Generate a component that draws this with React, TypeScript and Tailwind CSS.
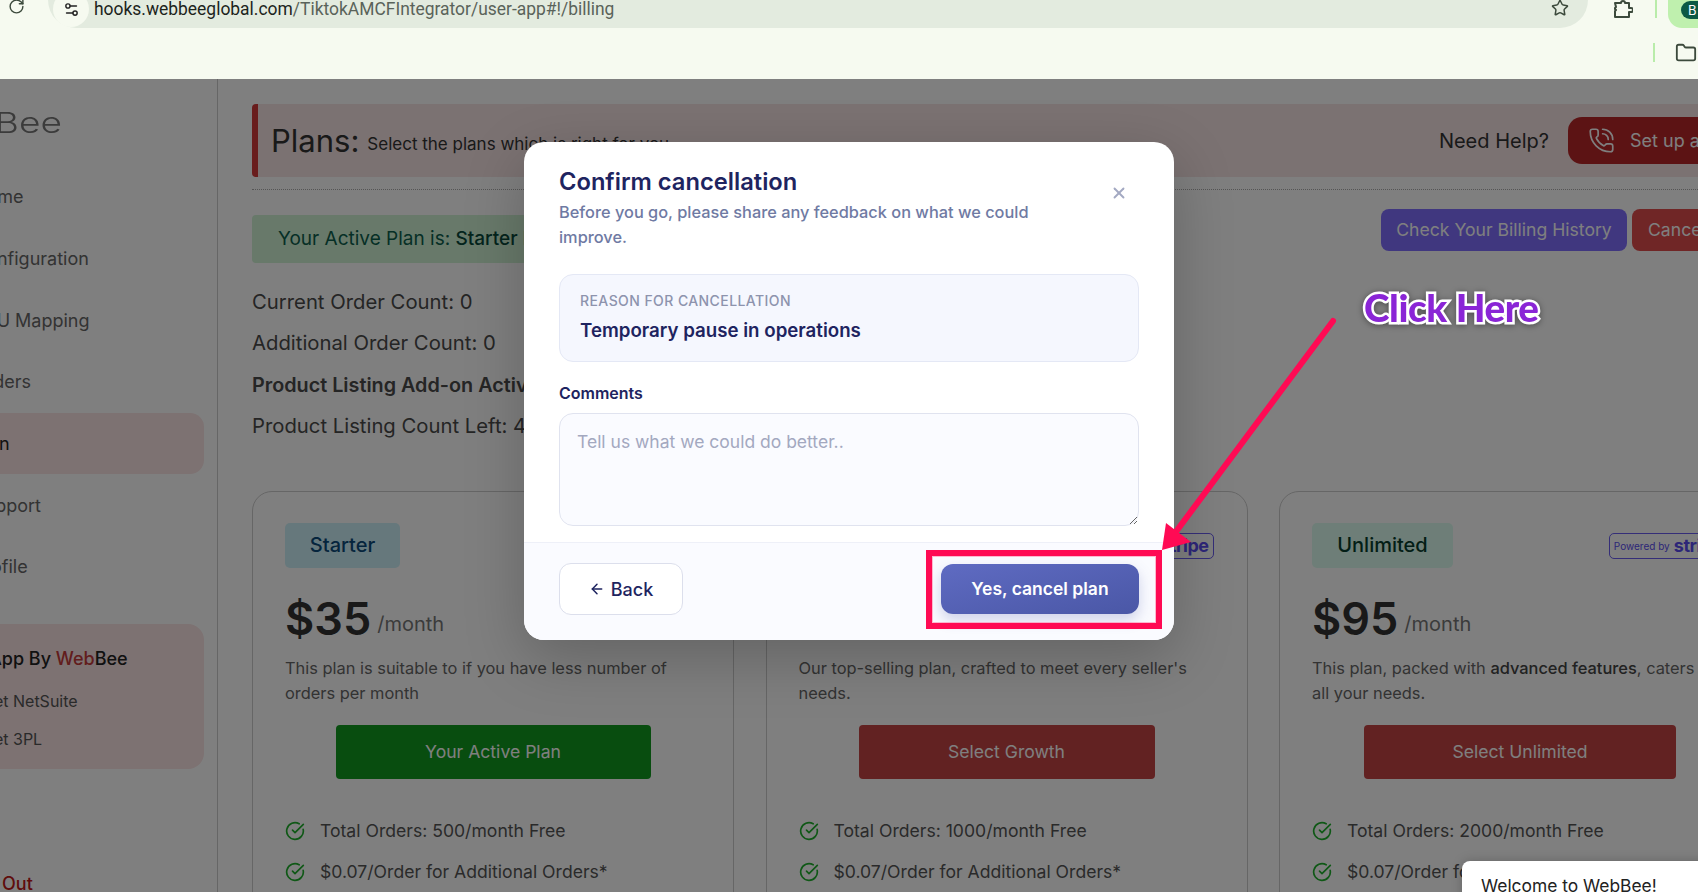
import React from "react";
import { ArrowLeft, CircleCheckBig, Folder, PhoneCall, RotateCw, Settings2, Star, X } from "lucide-react";

const navItems = ["Home", "Configuration", "SKU Mapping", "Orders", "Plan", "Support", "Profile"];

interface Plan {
  name: string;
  price: string;
  orders: string;
  cta: string;
  badge: string;
  nameColor: string;
  button: string;
  buttonWidth: string;
  desc: React.ReactNode;
}

const plans: Plan[] = [
  {
    name: "Starter",
    price: "$35",
    orders: "Total Orders: 500/month Free",
    cta: "Your Active Plan",
    badge: "bg-[#cdf0f8] w-[115px]",
    nameColor: "text-[#0a4a7a]",
    button: "bg-[#109a1e]",
    buttonWidth: "w-[315px]",
    desc: "This plan is suitable to if you have less number of orders per month",
  },
  {
    name: "Growth",
    price: "$65",
    orders: "Total Orders: 1000/month Free",
    cta: "Select Growth",
    badge: "bg-[#e6e0ff] w-[115px]",
    nameColor: "text-[#3d2a9c]",
    button: "bg-[#c44444]",
    buttonWidth: "w-[296px]",
    desc: "Our top-selling plan, crafted to meet every seller's needs.",
  },
  {
    name: "Unlimited",
    price: "$95",
    orders: "Total Orders: 2000/month Free",
    cta: "Select Unlimited",
    badge: "bg-[#dcfdf0] w-[141px]",
    nameColor: "text-[#063c2c]",
    button: "bg-[#c44444]",
    buttonWidth: "w-[312px]",
    desc: (
      <>
        This plan, packed with <span className="font-medium text-[#444]">advanced features</span>, caters to all your needs.
      </>
    ),
  },
];

const BrowserChrome = () => (
  <div className="h-[79px] w-full overflow-hidden bg-[#f6faf0] text-[#3c4a3c]">
    <div className="flex h-[28px] items-end">
      <RotateCw className="mb-[13px] ml-[8px] h-[17px] w-[17px] shrink-0" strokeWidth={2} />
      <div className="-mt-[28px] ml-[23px] flex h-[56px] w-[1540px] shrink-0 items-end rounded-b-[28px] bg-[#e3ebdf] pb-[1px]">
        <div className="ml-[5px] flex h-[36px] w-[36px] items-center justify-center rounded-full bg-[#f6faf0]">
          <Settings2 className="h-[17px] w-[17px] text-[#222]" strokeWidth={2} />
        </div>
        <span className="mb-[8px] ml-[5px] font-['Roboto',sans-serif] text-[17.45px] leading-[20px] text-[#5a635a]">
          <span className="text-[#1c241c]">hooks.webbeeglobal.com</span>/TiktokAMCFIntegrator/user-app#!/billing
        </span>
        <Star className="mb-[10px] ml-auto mr-[19px] h-[18px] w-[18px]" strokeWidth={2} />
      </div>
      <svg className="mb-[10px] ml-[25px] h-[18px] w-[20px] shrink-0" viewBox="0 0 20 18" fill="none" stroke="currentColor" strokeWidth="2" strokeLinejoin="round">
        <path d="M2 17h14v-5h2a2 2 0 0 0 0-4h-2V3h-4a2 2 0 0 0-4 0H2l1 4-1 1v1l1 1-1 1z" />
      </svg>
      <div className="mb-[10px] ml-[22px] h-[18px] w-[2px] shrink-0 bg-[#b9ecaa]" />
      <div className="ml-[11px] flex h-[28px] w-[40px] shrink-0 items-end rounded-bl-[14px] bg-[#bff0ae] pb-[9px] pl-[13px]">
        <div className="h-[18px] w-[28px] rounded-l-full bg-[#0b5a44] pl-[7px] text-[13px] leading-[18px] text-white">B</div>
      </div>
    </div>
    <div className="flex h-[51px] items-start justify-end">
      <div className="mt-[15px] mr-[20px] h-[19px] w-[2px] bg-[#b9ecaa]" />
      <Folder className="mt-[14px] mr-[1px] h-[22px] w-[22px]" strokeWidth={2} />
    </div>
  </div>
);

const Sidebar = () => (
  <aside className="h-full w-[218px] shrink-0 overflow-hidden border-r border-[#ccc] pt-[23px] text-[18px] text-[#666]">
    <div className="-ml-[83px] h-[42px] origin-left scale-x-[1.28] text-[29px] font-light leading-[42px] text-[#777]">WebBee</div>
    <nav className="mt-[22px] flex flex-col">
      {navItems.map((item) => (
        <div
          key={item}
          className={`-ml-[30px] flex h-[61.7px] w-[234px] items-center rounded-[14px] pl-[3px] ${
            item === "Plan" ? "bg-[#fae4e4] text-[#222]" : ""
          }`}
        >
          {item}
        </div>
      ))}
    </nav>
    <div className="-ml-[30px] mt-[26px] h-[145px] w-[234px] rounded-[16px] bg-[#fae4e4] pt-[23px] pl-[19px]">
      <div className="font-medium leading-[24px] text-[#222]">
        App By <span className="text-[#c43a3a]">Web</span>Bee
      </div>
      <div className="mt-[18px] text-[16px] leading-[24px] text-[#555]">
        <div className="-ml-[7px]">Get NetSuite</div>
        <div className="-ml-[7px] mt-[14px]">Get 3PL</div>
      </div>
    </div>
    <div className="-ml-[35px] mt-[101px] font-medium text-[#c01818]">Log Out</div>
  </aside>
);

const PlanCard = ({ plan }: { plan: Plan }) => (
  <div className="h-[500px] w-[482px] shrink-0 rounded-[20px] border border-[#ccc] bg-white px-[32px] pt-[31px]">
    <div className="flex items-start justify-between">
      <div className={`flex h-[45px] items-center justify-center rounded-[5px] text-[20px] font-medium ${plan.badge} ${plan.nameColor}`}>
        {plan.name}
      </div>
      <div className="mt-[10px] mr-[1px] flex h-[26px] w-[118px] items-center justify-center gap-[4px] rounded-[5px] border border-[#6a5df0] text-[#5a4df0]">
        <span className="text-[10px] leading-none">Powered by</span>
        <span className="text-[18px] font-bold leading-none tracking-tight">stripe</span>
      </div>
    </div>
    <div className="mt-[22px] flex items-baseline gap-[6px]">
      <span className="text-[45px] font-semibold leading-[58px] text-[#333]">{plan.price}</span>
      <span className="-translate-y-[4px] text-[20px] text-[#777]">/month</span>
    </div>
    <p className="mt-[8px] h-[50px] text-[16.4px] leading-[25px] text-[#666]">{plan.desc}</p>
    <button className={`mx-auto mt-[19px] block h-[54px] rounded-[4px] pt-[1px] text-[17.6px] text-white ${plan.button} ${plan.buttonWidth}`}>
      {plan.cta}
    </button>
    <ul className="mt-[39px] flex flex-col gap-[15px] text-[17.6px] leading-[26px] text-[#555]">
      <li className="flex items-center gap-[15px]">
        <CircleCheckBig className="h-[20px] w-[20px] text-[#1fb02c]" strokeWidth={2} />
        {plan.orders}
      </li>
      <li className="flex items-center gap-[15px]">
        <CircleCheckBig className="h-[20px] w-[20px] text-[#1fb02c]" strokeWidth={2} />
        $0.07/Order for Additional Orders*
      </li>
    </ul>
  </div>
);

const Main = () => (
  <main className="min-w-0 flex-1 overflow-hidden pl-[34px] pt-[25px]">
    <div className="flex h-[73px] w-[1500px] items-center whitespace-nowrap rounded-[4px] border-l-[6px] border-[#d33a3a] bg-[#f6e4e4] pl-[13px]">
      <span className="text-[31px] leading-none text-[#333]">Plans:</span>
      <span className="ml-[8px] mt-[8px] text-[17px] text-[#333]">Select the plans which is right for you</span>
      <span className="ml-auto text-[20px] text-[#333]">Need Help?</span>
      <div className="ml-[19px] flex h-[47px] w-[184px] items-center rounded-[14px] bg-[#b92628] pl-[20px] text-[18px] text-white">
        <PhoneCall className="mr-[15px] h-[27px] w-[27px]" strokeWidth={1.5} />
        Set up a call
      </div>
    </div>
    <div className="mt-[12px] w-[1500px] border-t border-dotted border-[#aaa]" />
    <div className="mt-[19px] flex h-[54px] w-[1500px] items-start">
      <div className="mt-[6px] flex h-[48px] w-[500px] shrink-0 items-center rounded-[4px] bg-[#d0f2d4] pl-[26px] text-[19px] text-[#0c5f4c]">
        Your Active Plan is:&nbsp;<span className="font-medium text-[#08483a]">Starter Plan</span>
      </div>
      <button className="ml-[629px] h-[42px] w-[246px] shrink-0 rounded-[8px] bg-[#806eff] text-[17.6px] text-white">Check Your Billing History</button>
      <button className="ml-[5px] h-[42px] w-[120px] shrink-0 rounded-[8px] bg-[#e04c4c] pl-[16px] text-left text-[17.6px] text-white">Cancel Plan</button>
    </div>
    <div className="mt-[24px] flex flex-col gap-[11.3px] text-[20.3px] leading-[30px] text-[#4a4a4a]">
      <div>Current Order Count: 0</div>
      <div>Additional Order Count: 0</div>
      <div className="text-[19.8px] font-semibold">Product Listing Add-on Active</div>
      <div>Product Listing Count Left: 49</div>
    </div>
    <div className="mt-[50px] flex gap-[31.5px]">
      {plans.map((plan) => (
        <PlanCard key={plan.name} plan={plan} />
      ))}
    </div>
  </main>
);

const CancelModal = () => (
  <div className="absolute left-[524px] top-[142px] h-[498px] w-[650px] overflow-hidden rounded-[20px] bg-white shadow-[0_18px_60px_rgba(0,0,0,0.22)]">
    <div className="h-[400px] px-[35px] pt-[24px]">
      <div className="flex items-start justify-between">
        <div>
          <h2 className="text-[23.7px] font-semibold leading-[32px] text-[#1e2460]">Confirm cancellation</h2>
          <p className="mt-[2px] w-[480px] text-[16.35px] font-medium leading-[25px] text-[#6f7aa3]">
            Before you go, please share any feedback on what we could improve.
          </p>
        </div>
        <X className="mr-[11px] mt-[18px] h-[18px] w-[18px] text-[#a3a9c2]" strokeWidth={2.5} />
      </div>
      <div className="mt-[24px] h-[88px] rounded-[14px] border border-[#e4e8f5] bg-[#f5f7fe] px-[20px] pt-[16px]">
        <div className="text-[14px] font-medium uppercase leading-[20px] tracking-[0.03em] text-[#8d93ad]">Reason for cancellation</div>
        <div className="mt-[6px] text-[18.7px] font-semibold leading-[28px] text-[#1e2460]">Temporary pause in operations</div>
      </div>
      <div className="mt-[20px] text-[16px] font-semibold leading-[22px] text-[#1e2460]">Comments</div>
      <textarea
        placeholder="Tell us what we could do better.."
        className="mt-[9px] block h-[113px] w-full rounded-[14px] border border-[#e0e3ef] bg-[#fafbff] px-[17px] py-[15px] text-[17.5px] leading-[26px] outline-none placeholder:text-[#a3a8bf]"
      />
    </div>
    <div className="flex h-[98px] items-start justify-between border-t border-[#eef0f8] bg-[#fafbff] px-[35px] pt-[20px]">
      <button className="flex h-[52px] w-[124px] items-center justify-center gap-[6px] rounded-[12px] border border-[#dcdfec] bg-white text-[18px] font-medium text-[#1e2460]">
        <ArrowLeft className="h-[16px] w-[16px]" strokeWidth={2.25} />
        Back
      </button>
      <button className="mt-[1px] h-[50px] w-[198px] rounded-[12px] bg-gradient-to-br from-[#5f6bc2] to-[#4a57a6] pt-[1px] text-[17.5px] font-semibold text-white shadow-[0_6px_14px_rgba(74,87,166,0.25)]">
        Yes, cancel plan
      </button>
    </div>
  </div>
);

// the annotation that was drawn on top of the screenshot
const Annotation = () => (
  <>
    <div className="absolute left-[926px] top-[550px] h-[79px] w-[236px] border-[6px] border-[#ff0a54] shadow-[inset_0_0_0_1px_rgba(255,120,160,0.5)]" />
    <svg className="absolute left-[1150px] top-[310px]" width="195" height="250" viewBox="1150 310 195 250">
      <line x1="1333" y1="321" x2="1175" y2="533" stroke="#ff0a54" strokeWidth="6" strokeLinecap="round" />
      <polygon points="1162,550 1166,523 1191,542" fill="#ff0a54" />
    </svg>
    <div className="absolute left-[1364px] top-[284px] font-['Lato',sans-serif] text-[38.5px] font-black leading-[46px] tracking-[-0.01em] text-[#8a25d6] [paint-order:stroke_fill] [-webkit-text-stroke:5px_white] drop-shadow-[0_1px_3px_rgba(0,0,0,0.4)]">
      Click Here
    </div>
  </>
);

export default function App() {
  return (
    <div className="relative h-[892px] w-[1698px] overflow-hidden bg-white font-['Inter',sans-serif]">
      <BrowserChrome />
      <div className="flex h-[813px]">
        <Sidebar />
        <Main />
      </div>
      <div className="absolute inset-x-0 bottom-0 top-[79px] bg-black/50" />
      <div className="absolute left-[1462px] top-[861px] h-[60px] w-[260px] rounded-tl-[8px] bg-white pl-[19px] pt-[13px] text-[17.4px] leading-[24px] text-[#222] shadow-[0_0_12px_rgba(0,0,0,0.2)]">
        Welcome to WebBee!
      </div>
      <CancelModal />
      <Annotation />
    </div>
  );
}
